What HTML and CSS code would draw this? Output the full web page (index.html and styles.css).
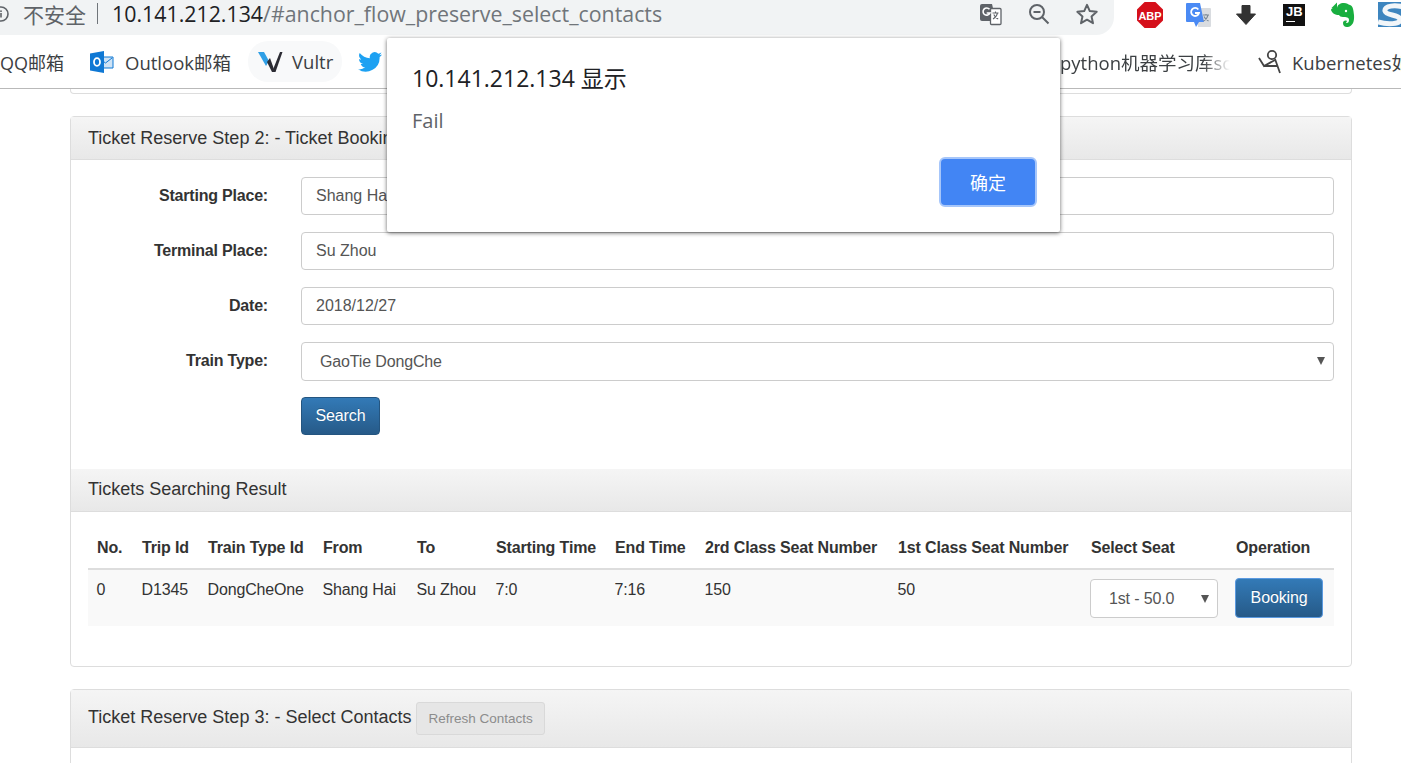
FILE: index.html
```html
<!DOCTYPE html>
<html lang="en">
<head>
    <meta charset="UTF-8">
    <meta name="viewport" content="width=device-width, initial-scale=1.0">
    <title>Ticket Reserve</title>
    <link rel="stylesheet" href="styles.css">
</head>
<body>

<!-- Browser address bar -->
<div class="toolbar">
    <div class="omnibox">
        <svg class="info-icon" width="16" height="16" viewBox="0 0 16 16"><circle cx="1" cy="8" r="7" fill="none" stroke="#5f6368" stroke-width="1.6"/><rect x="0.2" y="7" width="1.6" height="4.5" fill="#5f6368"/><rect x="0.2" y="4.4" width="1.6" height="1.6" fill="#5f6368"/></svg>
        <span class="not-secure">不安全</span>
        <span class="url-sep"></span>
        <span class="url"><span class="url-host">10.141.212.134</span>/#anchor_flow_preserve_select_contacts</span>
        <div class="omni-icons">
            <svg width="24" height="24" viewBox="0 0 24 24"><path d="M3 2h10l4 17H3a2 2 0 0 1-2-2V4a2 2 0 0 1 2-2z" fill="#5f6368"/><rect x="11.5" y="6.5" width="10.5" height="16" rx="1" fill="#fff" stroke="#5f6368" stroke-width="1.3"/><path d="M13.5 11h6M16.5 9.5V11M18.5 11c-.6 3-2.500 5-4.500 6M14.800 12.500c.8 2 2.500 3.600 4.400 4.500" fill="none" stroke="#5f6368" stroke-width="1.1"/><path d="M10.500 7.300A3.600 3.600 0 1 0 11 11H7.700" fill="none" stroke="#fff" stroke-width="1.600"/></svg>
            <svg width="24" height="24" viewBox="0 0 24 24"><circle cx="10" cy="10" r="7" fill="none" stroke="#5f6368" stroke-width="2"/><path d="M6.500 10h7M15 15l6.500 6.500" fill="none" stroke="#5f6368" stroke-width="2"/></svg>
            <svg width="24" height="24" viewBox="0 0 24 24"><path d="M12 2.800l2.800 6.300 6.900.7-5.200 4.600 1.500 6.800-6-3.500-6 3.500 1.500-6.800-5.200-4.600 6.900-.7z" fill="none" stroke="#5f6368" stroke-width="2" stroke-linejoin="round"/></svg>
        </div>
    </div>
    <div class="extensions">
        <svg width="26" height="26" viewBox="0 0 26 26"><path d="M7.600 0h10.800L26 7.600v10.800L18.400 26H7.600L0 18.400V7.600z" fill="#d5101b"/><text x="13" y="17.500" class="abp-text" text-anchor="middle">ABP</text></svg>
        <svg class="ext-translate" width="25" height="26" viewBox="0 0 25 26"><path d="M10 6h14a1 1 0 0 1 1 1v17a1 1 0 0 1-1 1H12z" fill="#d9dce0"/><path d="M1 1h13l4 19H13l-3 5-2-5H1a1 1 0 0 1-1-1V2a1 1 0 0 1 1-1z" fill="#4a8af4"/><path d="M12.300 7.500A4 4 0 1 0 13 11H9" fill="none" stroke="#fff" stroke-width="1.800"/><path d="M17 13h6M20 12v1M22 13c-.6 3-2.500 5-4.500 6M18 14.500c.8 2 2.500 3.500 4.500 4.500" fill="none" stroke="#7a8794" stroke-width="1.100"/></svg>
        <svg width="22" height="22" viewBox="0 0 22 22"><path d="M7 1.500h8v8.500h5.500L11 20.500 1.500 10H7z" fill="#333" stroke="#333" stroke-linejoin="round"/></svg>
        <div class="jb-icon"><span class="jb-text">JB</span><span class="jb-line"></span></div>
        <svg class="ext-evernote" width="24" height="26" viewBox="0 0 24 26"><path d="M6 6c.4-3 3-5 7-5 3 0 4 1.500 6 2 3 1 3.500 5 4 10 .5 6-1 11-6 12-3 .5-5-1-5-4 0-2 2-3 4-2l-1 2c2 .5 3-1 3-3 0-3-3-3-6-3-2 0-3.500-1-4-2-4 0-7-2-8-5 0-1 1-2 2-2z" fill="#19ae3f"/><path d="M0.500 6L6 .5V6z" fill="#19ae3f"/><circle cx="15" cy="9" r="1.200" fill="#fff"/></svg>
        <svg class="ext-s" width="30" height="25" viewBox="0 0 30 25"><rect width="30" height="25" fill="#3d85bf"/><path d="M30 6C16 2 6 4 7 9c1 5 15 3 15 9 0 4-12 5-22 2" fill="none" stroke="#f2f6f9" stroke-width="5"/></svg>
    </div>
</div>

<!-- Bookmarks bar -->
<div class="bookmarks">
    <span class="bookmark bm-qq">QQ邮箱</span>
    <span class="bookmark bm-outlook">
        <svg width="24" height="24" viewBox="0 0 24 24"><path d="M8 7h15v11H8z" fill="#cfe3f5" stroke="#0f78d4"/><path d="M9 8l6.500 5L22 8" fill="none" stroke="#0f78d4"/><path d="M0 3.500L14 1v22L0 20.500z" fill="#0f78d4"/><ellipse cx="7" cy="12" rx="3" ry="3.800" fill="none" stroke="#fff" stroke-width="1.800"/></svg>
        Outlook邮箱
    </span>
    <span class="bookmark bm-vultr">
        <svg width="26" height="24" viewBox="0 0 26 24"><path d="M1 2h6l5 9-3 5z" fill="#2f9fe6"/><path d="M15 22L23 2h2.500L18.500 22z" fill="#2b2b33"/><path d="M10 12l3-4 5 14h-3z" fill="#2b2b33"/></svg>
        Vultr
    </span>
    <svg class="bm-twitter" width="24" height="22" viewBox="0 0 24 20"><path d="M24 2.400c-.9.400-1.800.7-2.800.8 1-.6 1.800-1.600 2.200-2.700-1 .6-2 1-3.100 1.200A4.900 4.900 0 0 0 11.900 6.200C7.800 6 4.200 4 1.700.9c-1.300 2.300-.6 5.100 1.500 6.600-.8 0-1.600-.2-2.200-.6 0 2.400 1.700 4.400 3.900 4.900-.7.200-1.500.2-2.200.1.600 2 2.400 3.400 4.600 3.400A9.900 9.900 0 0 1 0 17.300 13.900 13.900 0 0 0 21.600 5c1-.7 1.800-1.600 2.400-2.600z" fill="#1da1f2"/></svg>
    <span class="bm-spacer"></span>
    <span class="bookmark bm-python">python机器学习库scikit</span>
    <span class="bookmark bm-k8s">
        <svg width="24" height="26" viewBox="0 0 24 26"><circle cx="14" cy="6" r="4.200" fill="none" stroke="#444" stroke-width="1.800"/><path d="M1 9l5 8 11-6M6 17h13M17 10l5 14" fill="none" stroke="#444" stroke-width="1.800"/></svg>
        Kubernetes如何
    </span>
</div>

<!-- Alert dialog -->
<div class="dialog">
    <div class="dialog-title">10.141.212.134 显示</div>
    <div class="dialog-msg">Fail</div>
    <div class="dialog-actions"><button class="dialog-ok">确定</button></div>
</div>

<!-- Page content -->
<div class="page">
    <div class="panel panel-cut"></div>

    <div class="panel">
        <div class="panel-heading">Ticket Reserve Step 2: - Ticket Booking</div>
        <div class="panel-body">
            <div class="form-row">
                <label class="form-label">Starting Place:</label>
                <input class="form-control" type="text" value="Shang Hai">
            </div>
            <div class="form-row">
                <label class="form-label">Terminal Place:</label>
                <input class="form-control" type="text" value="Su Zhou">
            </div>
            <div class="form-row">
                <label class="form-label">Date:</label>
                <input class="form-control" type="text" value="2018/12/27">
            </div>
            <div class="form-row">
                <label class="form-label">Train Type:</label>
                <div class="select-wrap select-wide">
                    <select class="form-select">
                        <option>GaoTie DongChe</option>
                    </select>
                </div>
            </div>
            <div class="form-row">
                <span class="form-label"></span>
                <button class="btn btn-primary btn-search">Search</button>
            </div>
        </div>

        <div class="panel-heading section-heading">Tickets Searching Result</div>
        <div class="table-wrap">
            <table class="result-table">
                <thead>
                    <tr>
                        <th>No.</th>
                        <th>Trip Id</th>
                        <th>Train Type Id</th>
                        <th>From</th>
                        <th>To</th>
                        <th>Starting Time</th>
                        <th>End Time</th>
                        <th>2rd Class Seat Number</th>
                        <th>1st Class Seat Number</th>
                        <th>Select Seat</th>
                        <th>Operation</th>
                    </tr>
                </thead>
                <tbody>
                    <tr>
                        <td>0</td>
                        <td>D1345</td>
                        <td>DongCheOne</td>
                        <td>Shang Hai</td>
                        <td>Su Zhou</td>
                        <td>7:0</td>
                        <td>7:16</td>
                        <td>150</td>
                        <td>50</td>
                        <td class="td-control">
                            <div class="select-wrap select-seat">
                                <select class="form-select">
                                    <option>1st - 50.0</option>
                                </select>
                            </div>
                        </td>
                        <td class="td-control"><button class="btn btn-primary btn-booking">Booking</button></td>
                    </tr>
                </tbody>
            </table>
        </div>
    </div>

    <div class="panel">
        <div class="panel-heading heading-contacts">Ticket Reserve Step 3: - Select Contacts <button class="btn-refresh">Refresh Contacts</button></div>
        <div class="panel-body"></div>
    </div>
</div>

</body>
</html>
```

FILE: styles.css
```css
* {
    box-sizing: border-box;
}
html, body {
    height: 763px;
    overflow: hidden;
}
body {
    margin: 0;
    background-color: #fff;
    color: #333;
    font-family: "Liberation Sans", Arial, sans-serif;
    font-size: 16px;
}

/* Browser address bar */
.toolbar {
    display: flex;
    height: 35px;
}
.omnibox {
    display: flex;
    flex: none;
    align-items: center;
    width: 1114px;
    height: 35px;
    padding-bottom: 8px;
    background-color: #f1f3f4;
    border-bottom-right-radius: 18px;
    font-family: "Open Sans", "Noto Sans CJK SC", sans-serif;
}
.info-icon {
    flex: none;
    width: 16px;
    margin-right: 7px;
}
.not-secure {
    font-family: "Noto Sans CJK SC", sans-serif;
    font-size: 21px;
    color: #5f6368;
}
.url-sep {
    width: 1px;
    height: 21px;
    margin: 0 14px 0 11px;
    background-color: #70757a;
}
.url {
    font-size: 21.35px;
    color: #70757a;
    white-space: nowrap;
}
.url-host {
    color: #202124;
}
.omni-icons {
    display: flex;
    gap: 24px;
    margin-left: auto;
    padding-right: 15px;
}
.extensions {
    display: flex;
    flex: none;
    align-items: center;
    gap: 24px;
    height: 29px;
    padding-left: 23px;
}
.extensions svg {
    flex: none;
}
.abp-text {
    font-family: "Liberation Sans", sans-serif;
    font-size: 11px;
    font-weight: bold;
    fill: #fff;
}
.ext-translate {
    margin-left: -1px;
}
.jb-icon {
    flex: none;
    width: 22px;
    height: 22px;
    margin-left: 2px;
    padding: 2px 3px;
    background-color: #111;
    color: #fff;
}
.jb-text {
    display: block;
    font-size: 13px;
    font-weight: bold;
    line-height: 12px;
}
.jb-line {
    display: block;
    width: 9px;
    height: 1px;
    margin-top: 3px;
    background-color: #fff;
}
.extensions .ext-evernote {
    margin-left: 2px;
}
.extensions .ext-s {
    margin-left: -1px;
}

/* Bookmarks bar */
.bookmarks {
    display: flex;
    align-items: center;
    height: 54px;
    overflow: hidden;
    border-bottom: 1px solid #b9b9b9;
    color: #3c4043;
    font-family: "Open Sans", "Noto Sans CJK SC", sans-serif;
    font-size: 18.5px;
    white-space: nowrap;
}
.bookmark {
    display: flex;
    align-items: center;
    flex: none;
}
.bm-qq {
    width: 90px;
    font-size: 18px;
}
.bm-outlook {
    gap: 11px;
    width: 158px;
}
.bm-vultr {
    gap: 9px;
    width: 94px;
    height: 41px;
    padding-left: 9px;
    background-color: #f8f9fa;
    border-radius: 20px;
}
.bm-twitter {
    flex: none;
    margin-left: 16px;
}
.bm-spacer {
    flex: none;
    width: 678px;
}
.bm-python {
    width: 170px;
    overflow: hidden;
    -webkit-mask-image: linear-gradient(to right, #000 84%, transparent);
    mask-image: linear-gradient(to right, #000 84%, transparent);
}
.bm-k8s {
    gap: 10px;
    margin-left: 28px;
}

/* Alert dialog */
.dialog {
    position: absolute;
    top: 38px;
    left: 387px;
    width: 673px;
    height: 194px;
    padding: 23px 23px 0 25px;
    background-color: #fff;
    border-radius: 2px;
    box-shadow: 0 1px 4px rgba(0, 0, 0, 0.6);
    font-family: "Open Sans", "Noto Sans CJK SC", sans-serif;
}
.dialog-title {
    font-size: 23px;
    line-height: 34px;
    color: #202124;
}
.dialog-msg {
    margin-top: 12px;
    font-size: 20px;
    line-height: 27px;
    color: #5f6368;
}
.dialog-actions {
    display: flex;
    justify-content: flex-end;
    margin-top: 23px;
}
.dialog-ok {
    width: 98px;
    height: 50px;
    background-color: #4285f4;
    border: 2px solid #a6c6fa;
    border-radius: 6px;
    color: #fff;
    font-family: "Noto Sans CJK SC", sans-serif;
    font-size: 18px;
}

/* Page content */
.page {
    padding: 0 49px 0 70px;
}
.panel {
    margin-bottom: 22px;
    background-color: #fff;
    border: 1px solid #ddd;
    border-radius: 4px;
}
.panel-cut {
    height: 5px;
    border-top: none;
    border-top-left-radius: 0;
    border-top-right-radius: 0;
}
.panel-heading {
    padding: 10px 17px;
    background-image: linear-gradient(to bottom, #f5f5f5, #e8e8e8);
    border-bottom: 1px solid #ddd;
    font-size: 18px;
    line-height: 22px;
    white-space: nowrap;
}
.panel-body {
    height: 309px;
    padding: 17px 17px 0;
}
.section-heading {
    height: 43px;
    padding-top: 9px;
}
.heading-contacts {
    display: flex;
    gap: 5px;
    height: 58px;
    padding: 12px 17px;
    line-height: 30px;
}
.form-row {
    display: flex;
    align-items: center;
    height: 38px;
    margin-bottom: 17px;
}
.form-label {
    flex: none;
    width: 180px;
    margin-right: 33px;
    font-weight: bold;
    letter-spacing: -0.2px;
    text-align: right;
}
.form-control {
    flex: 1;
    height: 38px;
    padding: 0 14px;
    border: 1px solid #ccc;
    border-radius: 4px;
    color: #555;
    font-family: inherit;
    font-size: 16px;
}
.select-wrap {
    position: relative;
}
.select-wrap::after {
    content: "";
    position: absolute;
    top: 50%;
    right: 9px;
    margin-top: -4px;
    border-top: 8px solid #555;
    border-left: 4px solid transparent;
    border-right: 4px solid transparent;
    pointer-events: none;
}
.select-wide {
    flex: 1;
}
.form-select {
    display: block;
    width: 100%;
    height: 39px;
    padding: 0 18px;
    appearance: none;
    background-color: #fff;
    border: 1px solid #ccc;
    border-radius: 4px;
    color: #555;
    font-family: inherit;
    font-size: 16px;
    letter-spacing: -0.15px;
}
.btn {
    border-radius: 4px;
    color: #fff;
    font-family: inherit;
    font-size: 16px;
    letter-spacing: -0.15px;
}
.btn-primary {
    background-image: linear-gradient(to bottom, #337ab7, #265a88);
    border: 1px solid #245580;
    text-shadow: 0 -1px 0 rgba(0, 0, 0, 0.2);
}
.btn-search {
    width: 79px;
    height: 38px;
}

/* Search result table */
.table-wrap {
    padding: 17px 17px 40px;
}
.result-table {
    width: 1246px;
    border-collapse: collapse;
    table-layout: fixed;
}
.result-table th {
    height: 40px;
    padding: 8px 8px 0 9px;
    border-bottom: 2px solid #ddd;
    font-size: 16px;
    letter-spacing: -0.15px;
    line-height: 22px;
    text-align: left;
    vertical-align: top;
    white-space: nowrap;
}
.result-table td {
    height: 57px;
    padding: 9px 8px 8px 8.5px;
    background-color: #f9f9f9;
    font-size: 16px;
    letter-spacing: -0.15px;
    line-height: 22px;
    vertical-align: top;
    white-space: nowrap;
}
.result-table td.td-control {
    padding: 8px 0 0 8px;
}
.result-table th:nth-child(1) { width: 45px; }
.result-table th:nth-child(2) { width: 66px; }
.result-table th:nth-child(3) { width: 115px; }
.result-table th:nth-child(4) { width: 94px; }
.result-table th:nth-child(5) { width: 79px; }
.result-table th:nth-child(6) { width: 119px; }
.result-table th:nth-child(7) { width: 90px; }
.result-table th:nth-child(8) { width: 193px; }
.result-table th:nth-child(9) { width: 193px; }
.result-table th:nth-child(10) { width: 145px; }
.result-table th:nth-child(11) { width: 107px; }
.select-seat {
    width: 128px;
    margin-top: 1px;
}
.btn-booking {
    width: 88px;
    height: 40px;
    border: 1px solid #5b9ae0;
}
.btn-refresh {
    flex: none;
    height: 33px;
    padding: 0 11px;
    background-color: #e6e6e6;
    border: 1px solid #d9d9d9;
    border-radius: 3px;
    color: #8c8c8c;
    font-family: inherit;
    font-size: 13.5px;
}
```
